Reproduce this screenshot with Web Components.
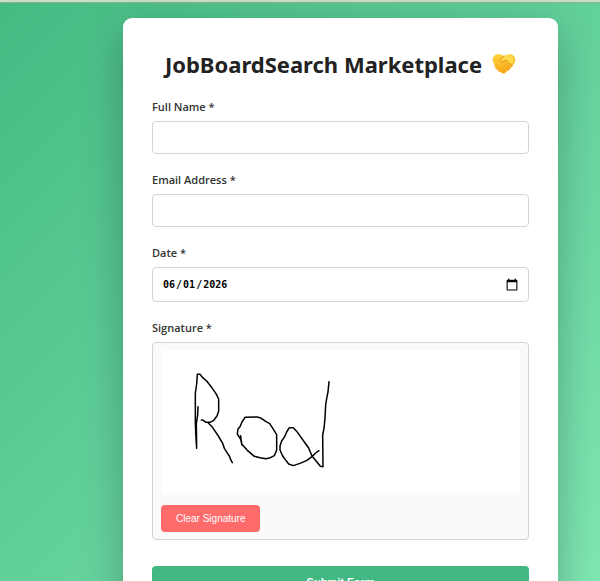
<!DOCTYPE html>
<html lang="en">
<head>
<meta charset="utf-8">
<meta name="viewport" content="width=device-width, initial-scale=1">
<title>JobBoardSearch Marketplace</title>
<style>
  body {
    margin: 0;
    font-family: "Open Sans", "Noto Sans", sans-serif;
    color: #222;
  }
</style>
</head>
<body>
<market-page>
  <form-card>
    <card-title slot="title">JobBoardSearch Marketplace</card-title>
    <form-field label="Full Name *" type="text"></form-field>
    <form-field label="Email Address *" type="email"></form-field>
    <form-field label="Date *" type="date" value="2026-06-01"></form-field>
    <signature-field label="Signature *"></signature-field>
    <submit-button slot="action">Submit Form</submit-button>
  </form-card>
</market-page>

<script>
const templatePage = document.createElement('template');
templatePage.innerHTML = `
<style>
  :host {
    display: flex;
    flex-direction: column;
    box-sizing: border-box;
    height: 100vh;
    overflow-y: auto;
    scrollbar-width: none;
    background: linear-gradient(135deg, #45ba83, #7fe6b3);
  }

  .strip {
    flex: none;
    height: 2px;
    background: #c6e0c6;
    border-bottom: 1px solid #8fae92;
  }

  main {
    padding: 15px 7% 24px 123px;
  }
</style>
<div class="strip"></div>
<main><slot></slot></main>
`;

class MarketPage extends HTMLElement {
    constructor() {
        super();
        this.attachShadow({ mode: 'open' });
        this.shadowRoot.appendChild(templatePage.content.cloneNode(true));
    }
}

const templateCard = document.createElement('template');
templateCard.innerHTML = `
<style>
  :host {
    display: block;
    padding: 29px;
    background: #fff;
    border-radius: 9px;
    box-shadow: 0 14px 42px rgba(0, 0, 0, 0.26);
  }

  .fields {
    display: flex;
    flex-direction: column;
    gap: 16px;
    margin: 16px 0 26px;
  }
</style>
<slot name="title"></slot>
<div class="fields"><slot></slot></div>
<slot name="action"></slot>
`;

class FormCard extends HTMLElement {
    constructor() {
        super();
        this.attachShadow({ mode: 'open' });
        this.shadowRoot.appendChild(templateCard.content.cloneNode(true));
    }
}

const templateTitle = document.createElement('template');
templateTitle.innerHTML = `
<style>
  :host {
    display: flex;
    align-items: center;
    justify-content: center;
    gap: 10px;
  }

  h1 {
    margin: 0;
    font-family: "Noto Sans", sans-serif;
    font-size: 22px;
    font-weight: 700;
    line-height: 34px;
    white-space: nowrap;
  }

  svg {
    flex: none;
    width: 24px;
    height: 20px;
  }
</style>
<h1><slot></slot></h1>
<svg viewBox="0 0 72 60" role="img" aria-label="handshake">
  <defs>
    <linearGradient id="skin" x1="0" y1="0" x2="0.3" y2="1">
      <stop offset="0" stop-color="#ffd23f"/>
      <stop offset="1" stop-color="#f8ae1b"/>
    </linearGradient>
  </defs>
  <path fill="url(#skin)" d="M2 17C2 6 11 0 21 1c7 0 10 4 15 4S46 0 54 1c10 1 17 9 16 18-1 7-5 10-7 15-1 5-6 7-9 10-1 5-5 6-9 7-3 5-6 8-11 7-4 1-6-1-8-4-5 1-7-2-8-6-5 0-8-3-8-8-4-3-3-6-3-10C4 26 2 22 2 17Z"/>
  <path fill="#ffda4c" d="M34 8c8-5 17-7 24-3 7 4 9 12 6 18-2 6-5 6-8 7L42 18l-10 5c-4 2-8-1-6-5Z"/>
  <g fill="none" stroke="#e8951c" stroke-width="2" stroke-linecap="round" stroke-linejoin="round">
    <path stroke="#dc8416" stroke-width="2.4" d="M36 6 25 17c-2 5 3 8 7 6l10-5 18 17"/>
    <path d="m42 29 13 13M36 34l11 12M30 41l9 10"/>
    <path d="m18 34-6 7M25 38l-8 9M31 43l-7 9M36 48l-4 8"/>
  </g>
</svg>
`;

class CardTitle extends HTMLElement {
    constructor() {
        super();
        this.attachShadow({ mode: 'open' });
        this.shadowRoot.appendChild(templateTitle.content.cloneNode(true));
    }
}

const templateField = document.createElement('template');
templateField.innerHTML = `
<style>
  :host {
    display: flex;
    flex-direction: column;
    gap: 4px;
  }

  label {
    font-size: 11px;
    font-weight: 600;
    line-height: 20px;
    color: #333;
  }

  input {
    box-sizing: border-box;
    width: 100%;
    height: 33px;
    padding: 0 9px;
    border: 1px solid #d4d4d4;
    border-radius: 4px;
    background: #fff;
    color: #000;
    font: 11px "Open Sans", sans-serif;
    outline: none;
  }

  input:focus {
    border-color: #42b883;
  }

  input[type="date"] {
    height: 35px;
    font: bold 10px "DejaVu Sans Mono", monospace;
  }

  input::-webkit-calendar-picker-indicator {
    width: 14px;
    height: 14px;
    padding: 0;
  }
</style>
<label for="control"></label>
<input id="control" required>
`;

class FormField extends HTMLElement {
    constructor() {
        super();
        this.attachShadow({ mode: 'open' });
        this.shadowRoot.appendChild(templateField.content.cloneNode(true));

        this._label = this.shadowRoot.querySelector('label');
        this._input = this.shadowRoot.querySelector('input');
    }

    connectedCallback() {
        this._label.textContent = this.getAttribute('label');
        this._input.type = this.getAttribute('type');
        this._input.value = this.getAttribute('value') || '';
    }
}

const templateSignature = document.createElement('template');
templateSignature.innerHTML = `
<style>
  :host {
    display: flex;
    flex-direction: column;
    gap: 4px;
  }

  .label {
    font-size: 11px;
    font-weight: 600;
    line-height: 20px;
    color: #333;
  }

  .box {
    display: flex;
    flex-direction: column;
    align-items: flex-start;
    gap: 10px;
    padding: 7px 8px;
    border: 1px solid #d4d4d4;
    border-radius: 4px;
    background: #fafafa;
  }

  svg {
    display: block;
    width: 100%;
    height: 145px;
    border-radius: 3px;
    background: #fff;
    cursor: crosshair;
  }

  button {
    height: 27px;
    padding: 0 15px;
    border: 0;
    border-radius: 4px;
    background: #ff6b6b;
    color: #fff;
    font: 10px "Liberation Sans", Arial, sans-serif;
    cursor: pointer;
  }

  button:hover {
    background: #ff5252;
  }
</style>
<div class="label" id="label"></div>
<div class="box">
  <svg viewBox="33 120 1077 435" preserveAspectRatio="xMinYMin meet" role="img" aria-labelledby="label">
    <g class="ink" fill="none" stroke="#000" stroke-width="4.5" stroke-linecap="round" stroke-linejoin="round">
      <path d="M144 290 143 315 139 342 140 415 138 385 136 340 136 250 140 222 142 193 150 193 158 203 170 213 187 235 198 251 206 267 206 304 201 318 190 332 180 337 168 337 160 331 154 330"/>
      <path d="M174 338 186 350 205 378 218 400 223 415 239 440 242 449 247 458"/>
      <path d="M272 377 273 388 276 405 272 388 262 372 264 357 270 350 276 336 285 322 322 321 334 325 347 334 359 341 369 356 380 374 380 420 373 437 361 443 348 446 330 443 313 439 292 421 277 404"/>
      <path d="M507 422 497 429 487 439 471 451 450 460 430 467 416 462 406 449 398 438 390 420 390 408 395 393 404 380 410 366 418 353 430 353 441 365 463 396 476 414 486 438 499 454 511 469 519 470 518 375 522 355 525 325 527 285 531 260 534 246 537 215"/>
    </g>
  </svg>
  <button type="button">Clear Signature</button>
</div>
`;

class SignatureField extends HTMLElement {
    constructor() {
        super();
        this.attachShadow({ mode: 'open' });
        this.shadowRoot.appendChild(templateSignature.content.cloneNode(true));

        this._label = this.shadowRoot.querySelector('.label');
        this._ink = this.shadowRoot.querySelector('.ink');
        this._clearBtn = this.shadowRoot.querySelector('button');

        this.onClearBtnClick();
    }

    connectedCallback() {
        this._label.textContent = this.getAttribute('label');
    }

    /**
     * wipe the strokes on click of clear button
     */
    onClearBtnClick() {
        this._clearBtn.addEventListener('click', () => {
            this._ink.replaceChildren();
        })
    }
}

const templateSubmit = document.createElement('template');
templateSubmit.innerHTML = `
<style>
  :host {
    display: block;
  }

  button {
    width: 100%;
    height: 31px;
    border: 0;
    border-radius: 4px;
    background: #42b883;
    color: #fff;
    font: bold 11px "Liberation Sans", Arial, sans-serif;
    cursor: pointer;
  }

  button:hover {
    background: #38a474;
  }
</style>
<button type="submit"><slot></slot></button>
`;

class SubmitButton extends HTMLElement {
    constructor() {
        super();
        this.attachShadow({ mode: 'open' });
        this.shadowRoot.appendChild(templateSubmit.content.cloneNode(true));
    }
}

window.customElements.define('market-page', MarketPage);
window.customElements.define('form-card', FormCard);
window.customElements.define('card-title', CardTitle);
window.customElements.define('form-field', FormField);
window.customElements.define('signature-field', SignatureField);
window.customElements.define('submit-button', SubmitButton);
</script>
</body>
</html>
